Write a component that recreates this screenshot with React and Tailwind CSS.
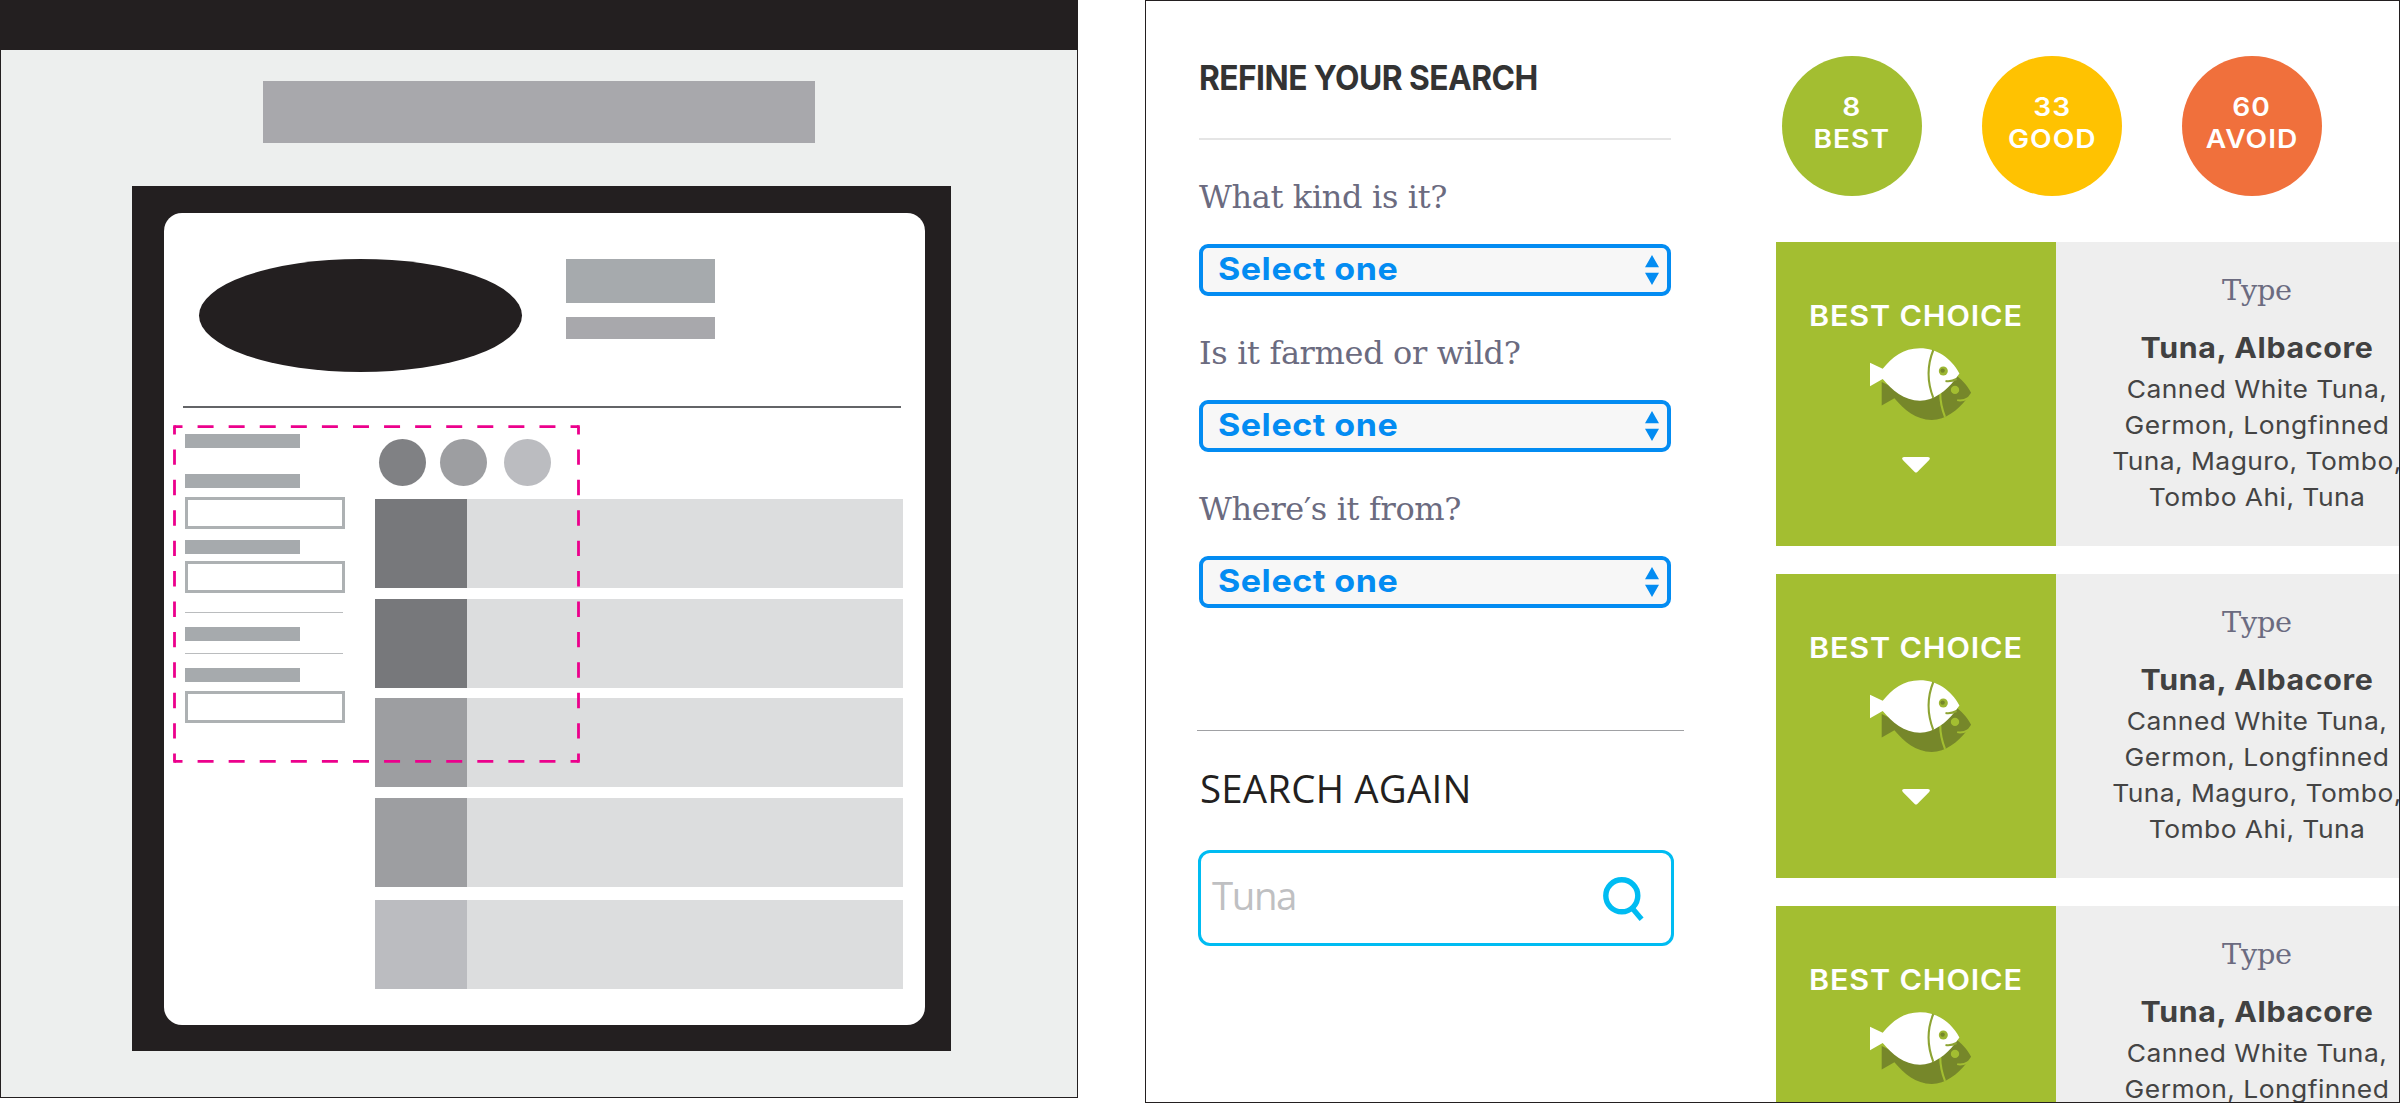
import React from "react";

const wireRows = [
  { tone: "bg-[#77787b]", gap: "mt-[13px]" },
  { tone: "bg-[#77787b]", gap: "mt-[11px]" },
  { tone: "bg-[#9d9ea1]", gap: "mt-[10px]" },
  { tone: "bg-[#9d9ea1]", gap: "mt-[11px]" },
  { tone: "bg-[#bbbcc0]", gap: "mt-[13px]" },
];

const Bar = ({ className = "" }) => (
  <div className={`h-[14px] w-[115px] bg-[#a6aaad] ${className}`} />
);
const Field = ({ className = "" }) => (
  <div className={`h-8 w-[160px] border-3 border-[#adb1b3] ${className}`} />
);
const Rule = ({ className = "" }) => (
  <div className={`h-px w-[158px] bg-[#babcbe] ${className}`} />
);

function Marquee() {
  return (
    <svg
      className="absolute left-[9px] top-[212px]"
      width="407"
      height="338"
      viewBox="0 0 407 338"
      fill="none"
      stroke="#ec008c"
      strokeWidth="2.8"
    >
      <path d="M1.5 1.7H405.5M1.5 336.3H405.5" strokeDasharray="16 15.08" strokeDashoffset="8" />
      <path d="M1.5 1.7V336.3M405.5 1.7V336.3" strokeDasharray="15.4 15.02" strokeDashoffset="7.7" />
      <path d="M.2 1.7H3M404 1.7h2.8M.2 336.3H3M404 336.3h2.8" />
    </svg>
  );
}

function Wireframe() {
  return (
    <section className="h-[1098px] w-[1078px] shrink-0 border border-t-0 border-[#231f20] bg-[#edefee]">
      <div className="h-[50px] bg-[#231f20]" />
      <div className="ml-[262px] mt-[31px] h-[62px] w-[552px] bg-[#a8a8ac]" />
      <div className="ml-[131px] mt-[43px] h-[865px] w-[819px] bg-[#231f20] pl-8 pt-[27px]">
        <div className="relative h-[812px] w-[761px] rounded-[18px] bg-white pt-[46px]">
          <div className="flex pl-[35px]">
            <div className="h-[113px] w-[323px] rounded-[50%] bg-[#231f20]" />
            <div className="ml-11 flex flex-col gap-[14px]">
              <div className="h-11 w-[149px] bg-[#a6aaad]" />
              <div className="h-[22px] w-[149px] bg-[#a8a8ac]" />
            </div>
          </div>
          <div className="ml-[19px] mt-[34px] h-[2px] w-[718px] bg-[#636467]" />
          <div className="flex pl-[21px]">
            <div className="w-[190px] pt-[26px]">
              <Bar />
              <Bar className="mt-[26px]" />
              <Field className="mt-[9px]" />
              <Bar className="mt-[11px]" />
              <Field className="mt-[7px]" />
              <Rule className="mt-[19px]" />
              <Bar className="mt-[14px]" />
              <Rule className="mt-[12px]" />
              <Bar className="mt-[14px]" />
              <Field className="mt-[9px]" />
            </div>
            <div className="pt-[31px]">
              <div className="flex pl-1">
                <div className="size-[47px] rounded-full bg-[#808184]" />
                <div className="ml-[14px] size-[47px] rounded-full bg-[#9d9ea1]" />
                <div className="ml-[17px] size-[47px] rounded-full bg-[#bbbcc0]" />
              </div>
              {wireRows.map((r, i) => (
                <div key={i} className={`flex h-[89px] w-[528px] bg-[#dcddde] ${r.gap}`}>
                  <div className={`w-[92px] ${r.tone}`} />
                </div>
              ))}
            </div>
          </div>
          <Marquee />
        </div>
      </div>
    </section>
  );
}

function SelectField({ label }) {
  return (
    <div className="mt-[37px]">
      <div className="h-10 whitespace-nowrap font-['DejaVu_Serif',serif] text-[32px] leading-[40px] tracking-[-0.35px] text-[#6b6b80]">
        {label}
      </div>
      <div className="mt-[27px] flex h-[52px] items-center justify-between rounded-[9px] border-4 border-[#038cf2] bg-[#f7f7f7] pl-[15px] pr-2">
        <span className="origin-left scale-x-[1.08] pb-[3px] text-[31.5px] font-bold leading-[41px] tracking-[0.5px] text-[#038cf2]">
          Select one
        </span>
        <svg width="14" height="30" viewBox="0 0 14 30" fill="#038cf2">
          <path d="M7 0l7 12.3H0zM7 30L0 17.7h14z" />
        </svg>
      </div>
    </div>
  );
}

function Filters() {
  return (
    <aside className="w-[472px] shrink-0 pt-[57px]">
      <h2 className="h-10 origin-left scale-x-[0.93] whitespace-nowrap text-[34.2px] font-bold leading-[40px] tracking-[-0.62px] text-[#333]">
        REFINE YOUR SEARCH
      </h2>
      <div className="mt-10 h-[2px] bg-[#e5e5e5]" />
      <SelectField label="What kind is it?" />
      <SelectField label="Is it farmed or wild?" />
      <SelectField label="Where&#8242;s it from?" />
      <div className="-ml-[2px] mt-[122px] h-px w-[487px] bg-[#a0a1a4]" />
      <h2 className="ml-px mt-[33px] h-12 whitespace-nowrap font-['Open_Sans',sans-serif] text-[38.4px] leading-[48px] tracking-[0.22px] text-[#231f20]">
        SEARCH AGAIN
      </h2>
      <div className="-ml-px mt-[38px] flex h-24 w-[476px] items-center justify-between rounded-xl border-[3px] border-[#00bcf2] pl-[11px] pr-[26px]">
        <span className="pb-[6px] font-['Open_Sans',sans-serif] text-[38.4px] leading-[48px] tracking-[-1.4px] text-[#bfc0c2]">
          Tuna
        </span>
        <svg width="42" height="46" viewBox="0 0 42 46" fill="none" stroke="#00bcf2" className="mt-1">
          <circle cx="18.8" cy="18.8" r="16" strokeWidth="5.4" />
          <path d="M29.3 31.2L38.6 42.2" strokeWidth="5.2" />
        </svg>
      </div>
    </aside>
  );
}

const ratings = [
  { n: "8", label: "BEST", bg: "bg-[#a3be31]" },
  { n: "33", label: "GOOD", bg: "bg-[#ffc201]" },
  { n: "60", label: "AVOID", bg: "bg-[#f0703c]" },
];

const fishBody =
  "M2 15.7L14.7 21.8C24 10.5 35 1.3 52 1.3C69 1.3 83 11 91.4 26.4L87.4 32C78 44 66 53.7 52 53.7C36 53.7 24 43 14.7 32L2 39.2Z";

function Fish() {
  return (
    <svg className="ml-[9px] mt-[15px]" width="106" height="76" viewBox="0 0 106 76" fill="none">
      <g transform="translate(11.7 19.3)">
        <path d={fishBody} fill="#76872a" />
        <path d="M65.3 3.5C58.8 19 58.8 34 65.3 50.5" stroke="#a3be31" strokeWidth="2.1" />
        <circle cx="75.3" cy="23.6" r="4.2" fill="#a3be31" />
        <path d="M77.5 33.8Q83 35.2 89.5 31.2" stroke="#a3be31" strokeWidth="2" />
      </g>
      <path d={fishBody} fill="#fff" />
      <path d="M65.3 3C58.8 19 58.8 34 65.3 50.8" stroke="#8da433" strokeWidth="2.1" />
      <circle cx="75.3" cy="24" r="4.5" fill="#9cb632" />
      <circle cx="74.6" cy="23.6" r="2.2" fill="#76872a" />
      <path d="M77.5 34Q83 35 88.6 32" stroke="#8da433" strokeWidth="2" />
    </svg>
  );
}

function ResultCard() {
  return (
    <article className="flex h-[304px] w-[682px] shrink-0">
      <div className="flex w-[280px] shrink-0 flex-col items-center bg-[#a3be31] pt-[58px]">
        <h3 className="scale-x-[1.06] whitespace-nowrap text-[28.8px] font-semibold leading-[32px] tracking-[0.8px] text-white">
          BEST CHOICE
        </h3>
        <Fish />
        <svg className="mt-[34px]" width="28" height="16" viewBox="0 0 28 16" fill="#fff">
          <path d="M2 0H26Q29 .4 27.2 3L15.3 15Q14 16.2 12.7 15L.8 3Q-1 .4 2 0Z" />
        </svg>
      </div>
      <div className="w-[402px] bg-[#eee] pt-[30px] text-center">
        <div className="font-['DejaVu_Serif',serif] text-[28.8px] leading-[36px] tracking-[-0.3px] text-[#6b6b80]">
          Type
        </div>
        <h4 className="mt-[22px] scale-x-[1.08] text-[28.1px] font-bold leading-[36px] tracking-[0.6px] text-[#414141]">
          Tuna, Albacore
        </h4>
        <p className="mt-[5px] scale-x-[1.07] whitespace-nowrap text-[24.7px] leading-[36px] tracking-[0.42px] text-[#444]">
          Canned White Tuna,
          <br />
          Germon, Longfinned
          <br />
          Tuna, Maguro, Tombo,
          <br />
          Tombo Ahi, Tuna
        </p>
      </div>
    </article>
  );
}

export default function App() {
  return (
    <main className="flex h-[1103px] w-[2400px] overflow-hidden bg-white font-[Inter,sans-serif]">
      <Wireframe />
      <section className="ml-[67px] flex h-[1103px] w-[1255px] shrink-0 overflow-hidden border border-[#231f20] bg-white pl-[53px]">
        <Filters />
        <div className="ml-[105px] flex flex-col pt-[55px]">
          <div className="flex gap-[60px] pl-[6px]">
            {ratings.map((r) => (
              <div
                key={r.label}
                className={`flex size-[140px] flex-col items-center justify-center rounded-full pb-[7px] text-[25.6px] font-semibold leading-[32px] tracking-[0.9px] text-white ${r.bg}`}
              >
                <span className="scale-x-110">{r.n}</span>
                <span className="scale-x-110">{r.label}</span>
              </div>
            ))}
          </div>
          <div className="mt-[46px] flex flex-col gap-7">
            <ResultCard />
            <ResultCard />
            <ResultCard />
          </div>
        </div>
      </section>
    </main>
  );
}
